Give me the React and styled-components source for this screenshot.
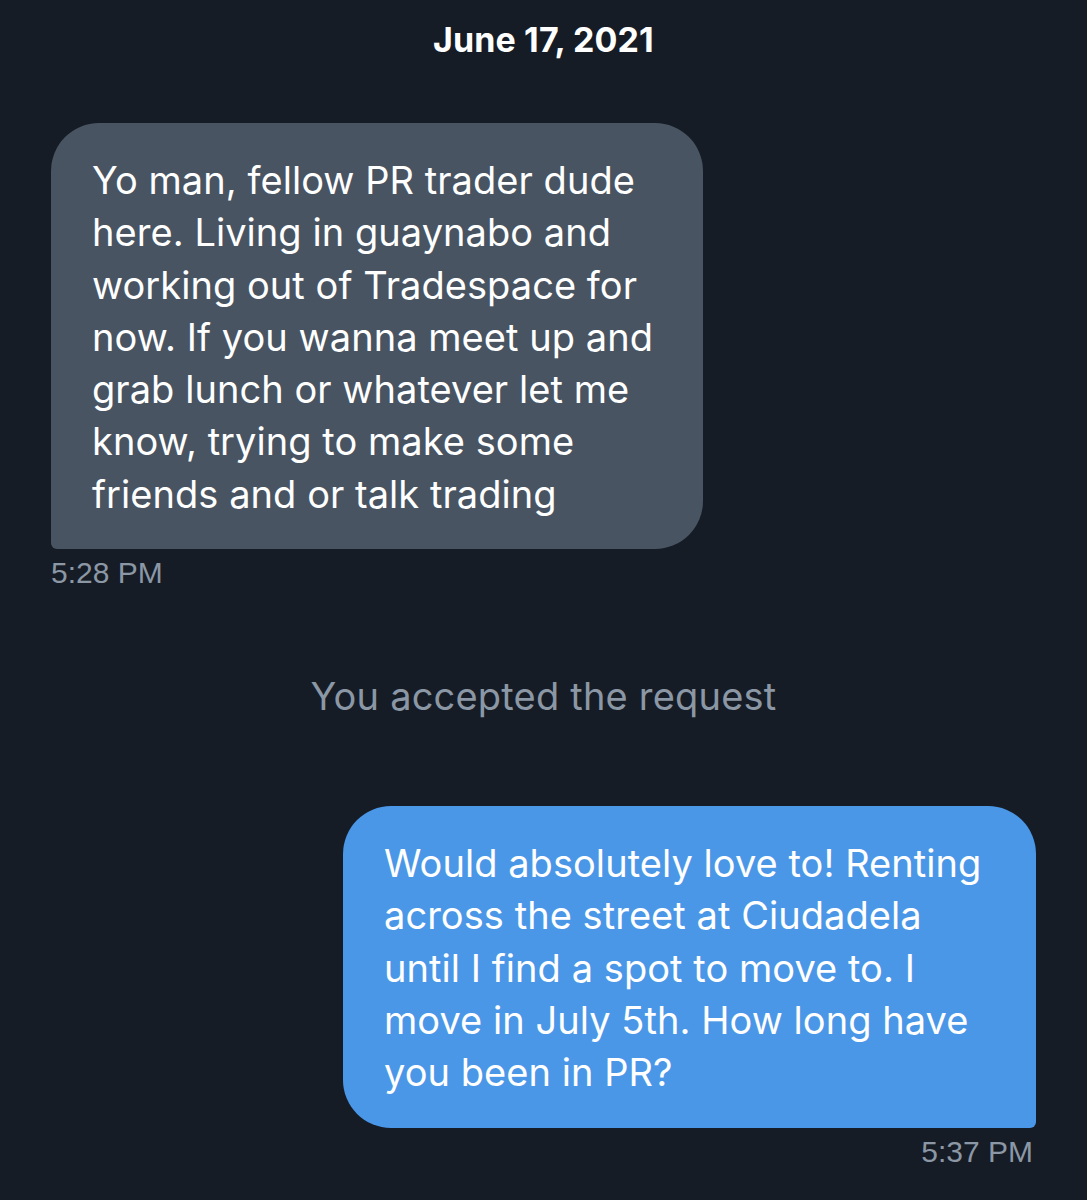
import styled, { createGlobalStyle } from 'styled-components';

const GlobalStyle = createGlobalStyle`
   html, body {
      margin: 0;
      padding: 0;
      background: #161c26;
   }
`

const Screen = styled.div`
   width: 1087px;
   height: 1200px;
   overflow: hidden;
   background: #161c26;
   font-family: Inter, "Noto Sans", sans-serif;
   box-sizing: border-box;
   padding: 20px 51px 0;
   display: flex;
   flex-direction: column;
`
const DateLabel = styled.div`
   text-align: center;
   color: #ffffff;
   font-size: 34px;
   font-weight: 700;
   line-height: 40px;
   letter-spacing: 0.1px;
`
const Group = styled.div`
   display: flex;
   flex-direction: column;
   align-items: ${(p) => (p.mine ? 'flex-end' : 'flex-start')};
   margin-top: ${(p) => p.top}px;
`
const Bubble = styled.div`
   box-sizing: border-box;
   width: ${(p) => p.width}px;
   padding: 31px 30px 29px 41px;
   color: #ffffff;
   font-size: 38px;
   line-height: 52.3px;
   letter-spacing: 0.05px;
   background: ${(p) => (p.mine ? '#4a97e8' : '#485462')};
   border-radius: ${(p) => (p.mine ? '48px 48px 6px 48px' : '48px 48px 48px 6px')};
`
const Time = styled.div`
   margin-top: 8px;
   color: #8b97a4;
   font-family: "Liberation Sans", Arial, sans-serif;
   font-size: 30px;
   line-height: 32px;
   padding: 0 ${(p) => (p.mine ? '3px' : '0')} 0 0;
`
const Notice = styled.div`
   margin-top: 85px;
   text-align: center;
   color: #8b97a4;
   font-size: 38px;
   line-height: 44px;
   letter-spacing: 0.2px;
`

const App = () => {
   return (
      <Screen>
         <GlobalStyle />
         <DateLabel>June 17, 2021</DateLabel>
         <Group top={63}>
            <Bubble width={652}>
               Yo man, fellow PR trader dude<br />
               here. Living in guaynabo and<br />
               working out of Tradespace for<br />
               now. If you wanna meet up and<br />
               grab lunch or whatever let me<br />
               know, trying to make some<br />
               friends and or talk trading
            </Bubble>
            <Time>5:28 PM</Time>
         </Group>
         <Notice>You accepted the request</Notice>
         <Group mine top={88}>
            <Bubble mine width={693}>
               Would absolutely love to! Renting<br />
               across the street at Ciudadela<br />
               until I find a spot to move to. I<br />
               move in July 5th. How long have<br />
               you been in PR?
            </Bubble>
            <Time mine>5:37 PM</Time>
         </Group>
      </Screen>
   );
};
export default App;
